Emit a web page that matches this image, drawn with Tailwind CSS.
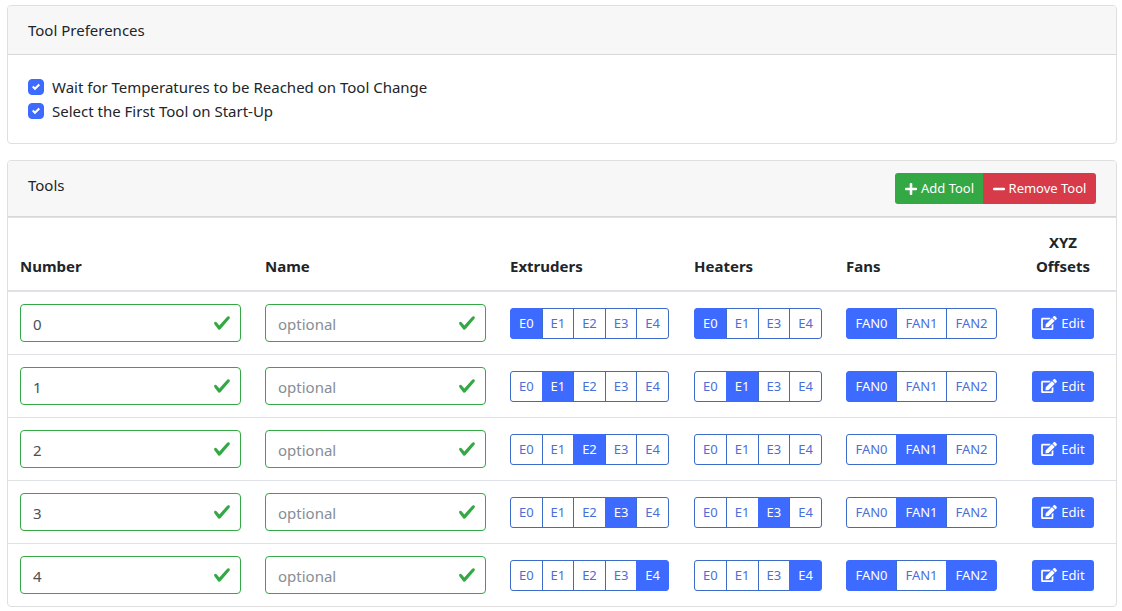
<!DOCTYPE html>
<html lang="en">
<head>
<meta charset="utf-8">
<meta name="viewport" content="width=device-width, initial-scale=1">
<title>Tools</title>
<script src="https://cdn.jsdelivr.net/npm/@tailwindcss/browser@4"></script>
</head>
<body class="bg-white font-['Noto_Sans',sans-serif] text-[15px] leading-6 text-[#212529]">
<svg class="hidden" aria-hidden="true">
  <symbol id="plus" viewBox="0 0 448 512"><path fill="currentColor" d="M416 208H272V64c0-17.670-14.330-32-32-32h-32c-17.670 0-32 14.330-32 32v144H32c-17.670 0-32 14.330-32 32v32c0 17.670 14.330 32 32 32h144v144c0 17.670 14.330 32 32 32h32c17.670 0 32-14.330 32-32V304h144c17.670 0 32-14.330 32-32v-32c0-17.670-14.330-32-32-32z"/></symbol>
  <symbol id="minus" viewBox="0 0 448 512"><path fill="currentColor" d="M416 208H32c-17.670 0-32 14.330-32 32v32c0 17.670 14.330 32 32 32h384c17.670 0 32-14.330 32-32v-32c0-17.670-14.330-32-32-32z"/></symbol>
  <symbol id="edit" viewBox="0 0 576 512"><path fill="currentColor" d="M402.600 83.200l90.200 90.200c3.800 3.800 3.800 10 0 13.800L274.400 405.600l-92.800 10.300c-12.400 1.400-22.900-9.100-21.500-21.500l10.300-92.800L388.800 83.200c3.800-3.800 10-3.800 13.800 0zm162-22.900l-48.800-48.800c-15.200-15.200-39.900-15.200-55.200 0l-35.400 35.400c-3.800 3.800-3.800 10 0 13.800l90.200 90.200c3.800 3.800 10 3.800 13.800 0l35.400-35.400c15.200-15.300 15.200-40 0-55.200zM384 346.200V448H64V128h229.800c3.200 0 6.200-1.300 8.500-3.500l40-40c7.600-7.600 2.200-20.500-8.500-20.500H48C21.500 64 0 85.500 0 112v352c0 26.500 21.500 48 48 48h352c26.500 0 48-21.500 48-48V306.200c0-10.700-12.900-16-20.500-8.500l-40 40c-2.200 2.300-3.500 5.300-3.500 8.500z"/></symbol>
  <symbol id="tick" viewBox="0 0 8 8"><path fill="currentColor" d="M6.564.75l-3.590 3.612-1.538-1.550L0 4.260 2.974 7.250 8 2.193z"/></symbol>
  <symbol id="valid" viewBox="0 0 8 8"><path fill="currentColor" d="M2.300 6.730L.6 4.530c-.4-1.040.46-1.400 1.100-.8l1.100 1.400 3.400-3.800c.6-.63 1.600-.27 1.200.7l-4 4.600c-.43.5-.8.4-1.100.1z"/></symbol>
</svg>
<main class="flex flex-col gap-4 pt-[5px] pr-[5px] pb-1 pl-[7px]">
  <section class="overflow-hidden rounded border border-[#dfdfdf]">
    <h2 class="border-b border-[#d8d8d8] bg-[#f7f7f7] px-5 py-3">Tool Preferences</h2>
    <div class="p-5">
      <label class="flex items-center gap-2">
        <span class="grid size-4 shrink-0">
          <input type="checkbox" checked class="col-start-1 row-start-1 size-4 appearance-none rounded border border-[#3d6bff] bg-white checked:bg-[#3d6bff]">
          <svg class="pointer-events-none col-start-1 row-start-1 size-2 place-self-center text-white"><use href="#tick"/></svg>
        </span>
        Wait for Temperatures to be Reached on Tool Change
      </label>
      <label class="flex items-center gap-2">
        <span class="grid size-4 shrink-0">
          <input type="checkbox" checked class="col-start-1 row-start-1 size-4 appearance-none rounded border border-[#3d6bff] bg-white checked:bg-[#3d6bff]">
          <svg class="pointer-events-none col-start-1 row-start-1 size-2 place-self-center text-white"><use href="#tick"/></svg>
        </span>
        Select the First Tool on Start-Up
      </label>
    </div>
  </section>

  <section class="overflow-hidden rounded border border-[#dfdfdf]">
    <header class="flex items-start justify-between border-b border-[#d8d8d8] bg-[#f7f7f7] px-5 py-3">
      <h2>Tools</h2>
      <div class="flex text-[13px] leading-[21px] text-white">
        <button type="button" class="flex h-[31px] w-[89px] items-center justify-center gap-1 rounded-l-[3px] bg-[#33a845] whitespace-nowrap"><svg class="h-[14px] w-3"><use href="#plus"/></svg>Add Tool</button>
        <button type="button" class="-ml-px flex h-[31px] w-[113px] items-center justify-center gap-1 rounded-r-[3px] bg-[#d73a49] whitespace-nowrap"><svg class="h-[14px] w-3"><use href="#minus"/></svg>Remove Tool</button>
      </div>
    </header>
    <table class="w-full table-fixed border-separate border-spacing-0 border-t border-[#dee2e6] text-left">
      <thead>
        <tr class="align-bottom">
          <th scope="col" class="border-b-2 border-[#dee2e6] p-3">Number</th>
          <th scope="col" class="border-b-2 border-[#dee2e6] p-3">Name</th>
          <th scope="col" class="w-[184px] border-b-2 border-[#dee2e6] p-3">Extruders</th>
          <th scope="col" class="w-[152px] border-b-2 border-[#dee2e6] p-3">Heaters</th>
          <th scope="col" class="w-[176px] border-b-2 border-[#dee2e6] p-3">Fans</th>
          <th scope="col" class="w-[106px] border-b-2 border-[#dee2e6] p-3 text-center">XYZ<br>Offsets</th>
        </tr>
      </thead>
      <tbody id="tools" class="[&>tr+tr>td]:border-t [&>tr+tr>td]:border-[#dee2e6]"></tbody>
    </table>
  </section>
</main>
<script>
  const EXTRUDERS = ['E0', 'E1', 'E2', 'E3', 'E4'];
  const HEATERS = ['E0', 'E1', 'E3', 'E4'];
  const FANS = ['FAN0', 'FAN1', 'FAN2'];
  const tools = [
    { extruders: ['E0'], heaters: ['E0'], fans: ['FAN0'] },
    { extruders: ['E1'], heaters: ['E1'], fans: ['FAN0'] },
    { extruders: ['E2'], heaters: [], fans: ['FAN1'] },
    { extruders: ['E3'], heaters: ['E3'], fans: ['FAN1'] },
    { extruders: ['E4'], heaters: ['E4'], fans: ['FAN0', 'FAN2'] },
  ];

  const field = (attrs) => `
    <div class="grid items-center">
      <input ${attrs} class="col-start-1 row-start-1 h-[38px] w-full min-w-0 rounded border border-[#33a845] bg-white pr-10 pl-3 pt-0.5 text-[#495057] outline-none placeholder:text-[#868e96]">
      <svg class="pointer-events-none col-start-1 row-start-1 mr-2.5 size-[18px] justify-self-end text-[#33a845]"><use href="#valid"/></svg>
    </div>`;

  const group = (label, width, options, active) => `
    <div role="group" aria-label="${label}" class="flex ${width} text-[13px]">
      ${options.map((o) => `<button type="button" aria-pressed="${active.includes(o)}" class="-ml-px h-[31px] min-w-0 flex-1 border border-[#3d6bc8] text-[#4a6fd8] first:ml-0 first:rounded-l-[3px] last:rounded-r-[3px] aria-pressed:border-[#3d6bff] aria-pressed:bg-[#3d6bff] aria-pressed:text-white">${o}</button>`).join('')}
    </div>`;

  document.getElementById('tools').innerHTML = tools.map((t, i) => `
    <tr>
      <td class="p-3">${field(`type="text" inputmode="numeric" aria-label="Number" value="${i}"`)}</td>
      <td class="p-3">${field('type="text" aria-label="Name" placeholder="optional"')}</td>
      <td class="px-3">${group('Extruders', 'w-[159px]', EXTRUDERS, t.extruders)}</td>
      <td class="px-3">${group('Heaters', 'w-[128px]', HEATERS, t.heaters)}</td>
      <td class="px-3">${group('Fans', 'w-[151px]', FANS, t.fans)}</td>
      <td class="px-3"><button type="button" class="mx-auto flex h-[31px] w-[62px] items-center justify-center gap-1 rounded-[3px] bg-[#3d6bff] text-[13px] text-white"><svg class="h-[14px] w-4"><use href="#edit"/></svg>Edit</button></td>
    </tr>`).join('');
</script>
</body>
</html>
